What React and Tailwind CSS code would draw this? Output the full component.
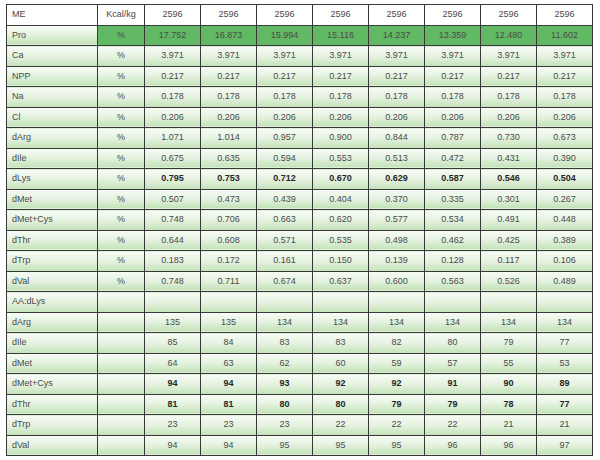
const rows = [
  { name: "Pro", unit: "%", vals: ["17.752", "16.873", "15.994", "15.116", "14.237", "13.359", "12.480", "11.602"], highlight: true },
  { name: "Ca", unit: "%", vals: Array(8).fill("3.971") },
  { name: "NPP", unit: "%", vals: Array(8).fill("0.217") },
  { name: "Na", unit: "%", vals: Array(8).fill("0.178") },
  { name: "Cl", unit: "%", vals: Array(8).fill("0.206") },
  { name: "dArg", unit: "%", vals: ["1.071", "1.014", "0.957", "0.900", "0.844", "0.787", "0.730", "0.673"] },
  { name: "dIle", unit: "%", vals: ["0.675", "0.635", "0.594", "0.553", "0.513", "0.472", "0.431", "0.390"] },
  { name: "dLys", unit: "%", vals: ["0.795", "0.753", "0.712", "0.670", "0.629", "0.587", "0.546", "0.504"], bold: true },
  { name: "dMet", unit: "%", vals: ["0.507", "0.473", "0.439", "0.404", "0.370", "0.335", "0.301", "0.267"] },
  { name: "dMet+Cys", unit: "%", vals: ["0.748", "0.706", "0.663", "0.620", "0.577", "0.534", "0.491", "0.448"] },
  { name: "dThr", unit: "%", vals: ["0.644", "0.608", "0.571", "0.535", "0.498", "0.462", "0.425", "0.389"] },
  { name: "dTrp", unit: "%", vals: ["0.183", "0.172", "0.161", "0.150", "0.139", "0.128", "0.117", "0.106"] },
  { name: "dVal", unit: "%", vals: ["0.748", "0.711", "0.674", "0.637", "0.600", "0.563", "0.526", "0.489"] },
  { name: "AA:dLys", unit: "", vals: Array(8).fill("") },
  { name: "dArg", unit: "", vals: ["135", "135", "134", "134", "134", "134", "134", "134"] },
  { name: "dIle", unit: "", vals: ["85", "84", "83", "83", "82", "80", "79", "77"] },
  { name: "dMet", unit: "", vals: ["64", "63", "62", "60", "59", "57", "55", "53"] },
  { name: "dMet+Cys", unit: "", vals: ["94", "94", "93", "92", "92", "91", "90", "89"], bold: true },
  { name: "dThr", unit: "", vals: ["81", "81", "80", "80", "79", "79", "78", "77"], bold: true },
  { name: "dTrp", unit: "", vals: ["23", "23", "23", "22", "22", "22", "21", "21"] },
  { name: "dVal", unit: "", vals: ["94", "94", "95", "95", "95", "96", "96", "97"] },
];

const cell = "border-[1.5px] border-[#383838] p-0";
const grad = "bg-linear-to-b from-[#f8fcf6] via-[#e4f2df] to-[#c3e2b8]";

export default function App() {
  return (
    <div className="w-[600px] h-[460px] bg-white pt-[4px] pl-[6px] font-['Liberation_Sans',Arial,sans-serif] text-[9px] text-[#4a4a4a]">
      <table className="border-collapse table-fixed w-[587px]">
        <colgroup>
          <col className="w-[91px]" />
          <col className="w-[47px]" />
          {Array.from({ length: 8 }).map((_, i) => (
            <col key={i} className="w-[56px]" />
          ))}
        </colgroup>
        <tbody>
          <tr className="h-[20.5px]">
            <td className={`${cell} bg-white pl-[5px] text-left`}>ME</td>
            <td className={`${cell} bg-white text-center`}>Kcal/kg</td>
            {Array.from({ length: 8 }).map((_, i) => (
              <td key={i} className={`${cell} bg-white text-center`}>2596</td>
            ))}
          </tr>
          {rows.map((r, ri) => (
            <tr key={ri} className="h-[20.5px]">
              <td className={`${cell} ${grad} pl-[5px] text-left`}>{r.name}</td>
              <td className={`${cell} text-center ${r.highlight ? "bg-[#62b964]" : grad}`}>{r.unit}</td>
              {r.vals.map((v, vi) => (
                <td
                  key={vi}
                  className={`${cell} text-center ${r.highlight ? "bg-[#62b964]" : grad} ${r.bold ? "font-bold text-[#262626]" : ""}`}
                >
                  {v}
                </td>
              ))}
            </tr>
          ))}
        </tbody>
      </table>
    </div>
  );
}
